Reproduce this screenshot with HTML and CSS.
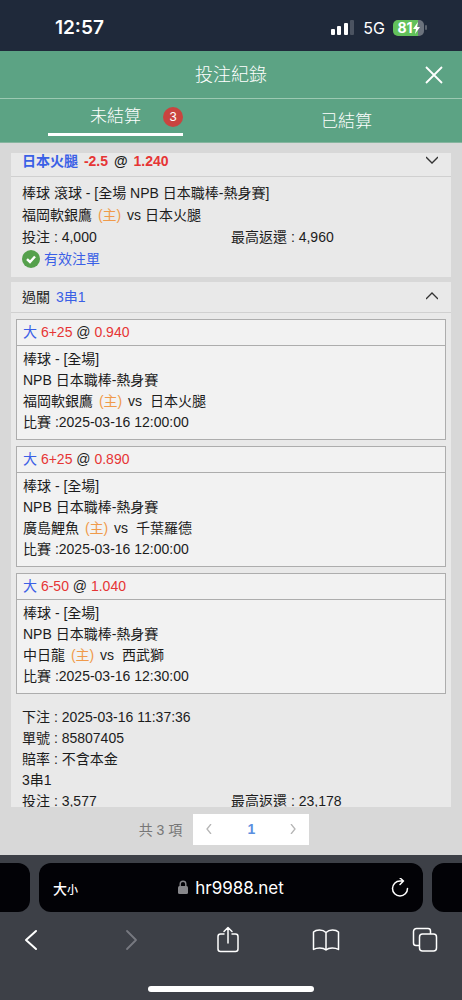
FILE: index.html
```html
<!DOCTYPE html>
<html lang="zh-Hant">
<head>
<meta charset="utf-8">
<meta name="viewport" content="width=device-width, initial-scale=1">
<title>投注紀錄</title>
<link rel="stylesheet" href="styles.css">
</head>
<body>
<div class="phone">
  <div class="status">
    <span class="clock">12:57</span>
    <div class="status-right">
      <svg class="signal" width="24" height="15" viewBox="0 0 24 15" fill="#fff" aria-hidden="true">
        <rect x="0" y="9" width="4" height="6" rx="1"/><rect x="6" y="6" width="4" height="9" rx="1"/><rect x="13" y="3" width="4" height="12" rx="1"/><rect x="19" y="0" width="4" height="15" rx="1" fill="#4b5361"/>
      </svg>
      <span class="network">5G</span>
      <div class="battery">
        <span>81</span>
        <svg width="7" height="12" viewBox="0 0 7 12" fill="#fff" aria-hidden="true"><path d="M5 0 0 7h3L2 12 7 5H4z"/></svg>
      </div>
    </div>
  </div>

  <header class="header">
    <h1 class="title">投注紀錄</h1>
    <button class="close" type="button" aria-label="關閉">
      <svg width="18" height="18" viewBox="0 0 18 18" fill="none" stroke="#fff" stroke-width="1.8" aria-hidden="true"><path d="M1 1 17 17M17 1 1 17"/></svg>
    </button>
  </header>
  <nav class="tabs">
    <button class="tab" type="button"><span class="tab-active">未結算<span class="badge">3</span></span></button>
    <button class="tab" type="button">已結算</button>
  </nav>

  <main class="content">
    <div class="list">
      <div class="list-inner">
        <section class="bet">
          <div class="bet-head">
            <h2 class="bet-title strong"><span class="pick">日本火腿</span> <span class="odds">-2.5</span> @ <span class="odds">1.240</span></h2>
            <button class="toggle" type="button" aria-label="展開"><svg width="12" height="8" viewBox="0 0 12 8" fill="none" stroke="#333" stroke-width="1.3" aria-hidden="true"><path d="M0 1 6 7 12 1"/></svg></button>
          </div>
          <div class="bet-body">
            <p>棒球 滾球 - [全場 NPB 日本職棒-熱身賽]</p>
            <p>福岡軟銀鷹 <span class="home">(主)</span> vs 日本火腿</p>
            <div class="amounts"><span>投注 : 4,000</span><span>最高返還 : 4,960</span></div>
            <p class="valid">
              <svg width="18" height="18" viewBox="0 0 18 18" aria-hidden="true"><circle cx="9" cy="9" r="9" fill="#55a04c"/><path d="M5 9.2 8 12 13 6.5" fill="none" stroke="#fff" stroke-width="2.4"/></svg>
              有效注單
            </p>
          </div>
        </section>

        <section class="bet">
          <div class="bet-head">
            <h2 class="bet-title">過關 <span class="combo">3串1</span></h2>
            <button class="toggle" type="button" aria-label="收合"><svg width="12" height="8" viewBox="0 0 12 8" fill="none" stroke="#333" stroke-width="1.3" aria-hidden="true"><path d="M0 7 6 1 12 7"/></svg></button>
          </div>
          <div class="legs">
            <article class="leg">
              <h3 class="leg-head"><span class="pick">大</span> <span class="odds">6+25</span> @ <span class="odds">0.940</span></h3>
              <div class="leg-body">
                <p>棒球 - [全場]</p>
                <p>NPB 日本職棒-熱身賽</p>
                <p>福岡軟銀鷹 <span class="home">(主)</span> vs &nbsp;日本火腿</p>
                <p>比賽 :2025-03-16 12:00:00</p>
              </div>
            </article>
            <article class="leg">
              <h3 class="leg-head"><span class="pick">大</span> <span class="odds">6+25</span> @ <span class="odds">0.890</span></h3>
              <div class="leg-body">
                <p>棒球 - [全場]</p>
                <p>NPB 日本職棒-熱身賽</p>
                <p>廣島鯉魚 <span class="home">(主)</span> vs &nbsp;千葉羅德</p>
                <p>比賽 :2025-03-16 12:00:00</p>
              </div>
            </article>
            <article class="leg">
              <h3 class="leg-head"><span class="pick">大</span> <span class="odds">6-50</span> @ <span class="odds">1.040</span></h3>
              <div class="leg-body">
                <p>棒球 - [全場]</p>
                <p>NPB 日本職棒-熱身賽</p>
                <p>中日龍 <span class="home">(主)</span> vs &nbsp;西武獅</p>
                <p>比賽 :2025-03-16 12:30:00</p>
              </div>
            </article>
          </div>
          <div class="summary">
            <p>下注 : 2025-03-16 11:37:36</p>
            <p>單號 : 85807405</p>
            <p>賠率 : 不含本金</p>
            <p>3串1</p>
            <div class="amounts"><span>投注 : 3,577</span><span>最高返還 : 23,178</span></div>
          </div>
        </section>
      </div>
    </div>
    <div class="pagination">
      <span>共 3 項</span>
      <div class="pager">
        <button type="button" aria-label="上一頁"><svg width="6" height="10" viewBox="0 0 6 10" fill="none" stroke="#b5b5b5" stroke-width="1.3" aria-hidden="true"><path d="M5 0 1 5 5 10"/></svg></button>
        <button class="current" type="button">1</button>
        <button type="button" aria-label="下一頁"><svg width="6" height="10" viewBox="0 0 6 10" fill="none" stroke="#b5b5b5" stroke-width="1.3" aria-hidden="true"><path d="M1 0 5 5 1 10"/></svg></button>
      </div>
    </div>
  </main>

  <footer class="browser">
    <div class="address-row">
      <div class="side side-left"></div>
      <div class="address">
        <button class="text-size" type="button" aria-label="大小"><span class="big">大</span><span class="small">小</span></button>
        <button class="url" type="button">
          <svg width="10" height="15" viewBox="0 0 10 15" aria-hidden="true"><rect x="0" y="6" width="10" height="8" rx="1.5" fill="#87878b"/><path d="M2.2 7V4a2.8 2.8 0 0 1 5.6 0v3" fill="none" stroke="#87878b" stroke-width="1.4"/></svg>
          hr9988.net
        </button>
        <button class="reload" type="button" aria-label="重新載入">
          <svg width="18" height="20" viewBox="0 0 18 20" fill="none" stroke="#fff" stroke-width="1.5" stroke-linecap="round" stroke-linejoin="round" aria-hidden="true"><path d="M16.500 10.500A7.500 7.500 0 1 1 9 3H12.500M9 0 12.500 3 9 6.500"/></svg>
        </button>
      </div>
      <div class="side side-right"></div>
    </div>
    <div class="toolbar">
      <button type="button" aria-label="上一頁"><svg width="26" height="28" viewBox="0 0 26 28" fill="none" stroke="#fff" stroke-width="2" stroke-linecap="round" stroke-linejoin="round" aria-hidden="true"><path d="M18 5 8 14 18 23"/></svg></button>
      <button type="button" aria-label="下一頁"><svg width="26" height="28" viewBox="0 0 26 28" fill="none" stroke="#777980" stroke-width="1.8" stroke-linecap="round" stroke-linejoin="round" aria-hidden="true"><path d="M11 5 20 14 11 23"/></svg></button>
      <button type="button" aria-label="分享"><svg width="26" height="28" viewBox="0 0 26 28" fill="none" stroke="#fff" stroke-width="1.5" stroke-linecap="round" stroke-linejoin="round" aria-hidden="true"><path d="M10 8H6.5A2.5 2.5 0 0 0 4 10.500V23a2.500 2.500 0 0 0 2.500 2.500h15A2.500 2.500 0 0 0 24 23V10.500A2.500 2.500 0 0 0 21.500 8H18M14 17V1.500M10 5.500l4-4 4 4"/></svg></button>
      <button type="button" aria-label="書籤"><svg width="28" height="28" viewBox="0 0 28 28" fill="none" stroke="#fff" stroke-width="1.5" stroke-linecap="round" stroke-linejoin="round" aria-hidden="true"><path d="M14 6.500C12 4.500 10 4 7.500 4S3 4.500 1.500 6v17.500c3-2 9.500-2.500 12.500.5 3-3 9.500-2.500 12.500-.5V6C25 4.500 23 4 20.500 4s-4.500.5-6.500 2.500V24"/></svg></button>
      <button type="button" aria-label="分頁"><svg width="26" height="28" viewBox="0 0 26 28" fill="none" stroke="#fff" stroke-width="1.500" stroke-linejoin="round" aria-hidden="true"><rect x="7.500" y="8" width="17" height="17" rx="3"/><path d="M7.500 19.500H4A2.500 2.500 0 0 1 1.500 17V5.500A3 3 0 0 1 4.500 2.500H16A2.500 2.500 0 0 1 18.500 5v3"/></svg></button>
    </div>
    <div class="home-bar"></div>
  </footer>
</div>
</body>
</html>
```

FILE: styles.css
```css
* { box-sizing: border-box; }

body, h1, h2, h3, p { margin: 0; }

body {
  background: #d8d8d8;
  color: #1c1c1c;
  font-family: "Liberation Sans", "Noto Sans CJK TC", sans-serif;
  font-size: 14px;
}

h1, h2, h3 { font-size: inherit; font-weight: 400; }

button {
  padding: 0;
  border: 0;
  background: none;
  color: inherit;
  font: inherit;
}

svg { display: block; flex: none; }

.phone {
  display: flex;
  flex-direction: column;
  height: 100vh;
}

/* Status bar */
.status {
  display: flex;
  flex: none;
  align-items: center;
  justify-content: space-between;
  height: 51px;
  padding: 4px 38px 0 55px;
  background: #1f293a;
  color: #fff;
  font-family: Inter, sans-serif;
}

.clock { font-size: 19px; font-weight: 600; }

.status-right { display: flex; align-items: center; gap: 8px; }

.network { font-size: 16px; }

.battery {
  position: relative;
  display: flex;
  align-items: center;
  justify-content: center;
  width: 31px;
  height: 16px;
  border-radius: 5px;
  background: linear-gradient(90deg, #62c15b 82%, #6c737d 82%);
  font-size: 14px;
  font-weight: 700;
}

.battery::after {
  content: "";
  position: absolute;
  right: -3px;
  width: 2px;
  height: 5px;
  border-radius: 1px;
  background: #5b626d;
}

/* Page header */
.header {
  display: grid;
  flex: none;
  grid-template-columns: 1fr auto 1fr;
  align-items: center;
  height: 48px;
  padding: 0 19px;
  border-bottom: 1px solid #9cc9b2;
  background: #5ca384;
  color: #fff;
}

.title { grid-column: 2; padding-bottom: 3px; font-size: 18px; font-weight: 300; }

.close { justify-self: end; }

.tabs {
  display: grid;
  flex: none;
  grid-template-columns: 1fr 1fr;
  height: 44px;
  border-bottom: 1px solid #86b59f;
  background: #5ca384;
  color: #fff;
  font-size: 17px;
  font-weight: 300;
}

.tab { display: flex; align-items: center; justify-content: center; padding-bottom: 2px; }

.tab-active {
  position: relative;
  width: 135px;
  padding-bottom: 2px;
  border-bottom: 3px solid #fff;
  line-height: 28px;
}

.badge {
  position: absolute;
  top: 4px;
  right: 0;
  width: 20px;
  height: 20px;
  border-radius: 50%;
  background: #c9443f;
  font-size: 13px;
  font-weight: 400;
  line-height: 20px;
}

/* Bet list */
.content {
  display: flex;
  flex: 1;
  flex-direction: column;
  min-height: 0;
  padding: 10px 11px 0;
}

.list { flex: 1; min-height: 0; overflow: hidden; }

.list-inner {
  display: grid;
  gap: 5px;
  margin-top: -7px;
}

.bet { background: #e9e9e9; }

.bet-head {
  display: flex;
  align-items: center;
  justify-content: space-between;
  height: 31px;
  padding: 0 13px 3px 11px;
  border-bottom: 1px solid #d0d0d0;
}

.strong { font-weight: 700; }

.strong .odds { margin: 0 2px; }

.pick, .combo, .valid { color: #3a60e6; }

.combo { margin-left: 2px; }

.odds { color: #e63535; }

.home { margin: 0 2px; color: #f09a4a; }

.bet-body { padding: 5px 11px 7px; line-height: 22px; }

.amounts { display: grid; grid-template-columns: 1fr 1fr; }

.valid { display: flex; align-items: center; gap: 4px; }

.legs { display: grid; gap: 6px; padding: 6px 5px 0; }

.leg { border: 1px solid #adadad; background: #f2f2f2; }

.leg-head {
  padding: 0 6px;
  border-bottom: 1px solid #adadad;
  line-height: 25px;
}

.leg-body { padding: 3px 6px 6px; line-height: 21px; }

.summary { padding: 13px 11px; line-height: 21px; }

/* Pagination */
.pagination {
  display: flex;
  flex: none;
  align-items: center;
  justify-content: center;
  gap: 11px;
  height: 48px;
  padding: 0 14px 4px 0;
  color: #777;
}

.pager {
  display: grid;
  grid-template-columns: 32px 52px 32px;
  height: 31px;
  background: #fff;
}

.pager button { display: grid; place-items: center; }

.pager .current { color: #5b8fe0; font-weight: 700; }

/* Browser controls */
.browser {
  display: flex;
  flex: none;
  flex-direction: column;
  height: 145px;
  padding-top: 8px;
  background: #3d4047;
  color: #fff;
}

.address-row { display: flex; gap: 9px; height: 49px; }

.side { width: 30px; background: #020206; }

.side-left { border-radius: 0 12px 12px 0; }

.side-right { border-radius: 12px 0 0 12px; }

.address {
  display: grid;
  flex: 1;
  grid-template-columns: 1fr auto 1fr;
  align-items: center;
  padding: 0 14px;
  border-radius: 12px;
  background: #020206;
}

.text-size {
  display: flex;
  align-items: baseline;
  font-weight: 500;
}

.big { font-size: 14px; }

.small { font-size: 11px; }

.url {
  display: flex;
  align-items: center;
  gap: 7px;
  font-family: Inter, sans-serif;
  font-size: 17px;
}

.reload { justify-self: end; }

.toolbar {
  display: flex;
  align-items: center;
  justify-content: space-between;
  height: 56px;
  padding: 0 24px 0 18px;
}

.home-bar {
  width: 166px;
  height: 6px;
  margin: auto auto 8px;
  border-radius: 3px;
  background: #fff;
}
```
